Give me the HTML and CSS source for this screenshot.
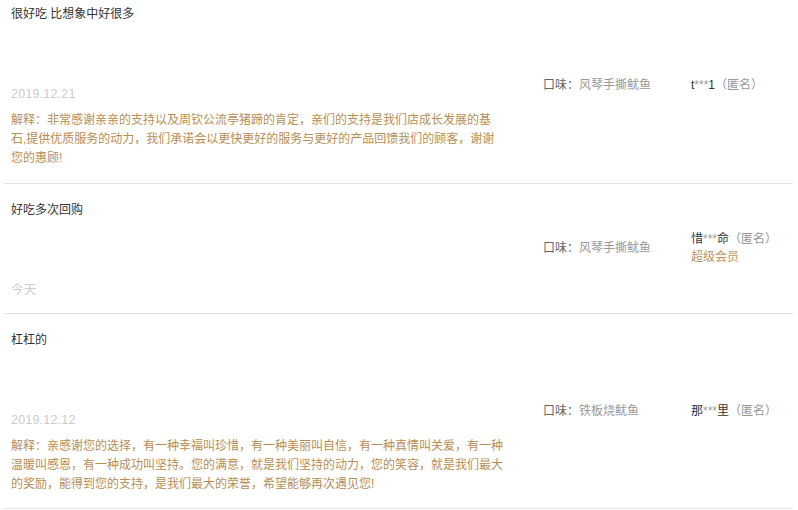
FILE: index.html
```html
<!DOCTYPE html>
<html>
<head>
    <meta charset="utf-8">
    <title>累计评价</title>
    <link rel="stylesheet" href="styles.css">
</head>
<body>
    <div class="rate-grid">
        <table>
            <tr>
                <td class="col-content">
                    <div class="rate-text">很好吃 比想象中好很多</div>
                    <div class="rate-date">2019.12.21</div>
                    <div class="rate-reply">解释：非常感谢亲亲的支持以及周钦公流亭猪蹄的肯定，亲们的支持是我们店成长发展的基石,提供优质服务的动力，我们承诺会以更快更好的服务与更好的产品回馈我们的顾客，谢谢您的惠顾!</div>
                </td>
                <td class="col-meta">
                    <span class="sku-label">口味：</span><span class="sku-value">风琴手撕鱿鱼</span>
                </td>
                <td class="col-author">
                    <div class="author">t<span class="mask">***</span>1<span class="anon">（匿名）</span></div>
                </td>
            </tr>
            <tr>
                <td class="col-content">
                    <div class="rate-text">好吃多次回购</div>
                    <div class="rate-date">今天</div>
                </td>
                <td class="col-meta">
                    <span class="sku-label">口味：</span><span class="sku-value">风琴手撕鱿鱼</span>
                </td>
                <td class="col-author">
                    <div class="author">惜<span class="mask">***</span>命<span class="anon">（匿名）</span></div>
                    <div class="vip">超级会员</div>
                </td>
            </tr>
            <tr>
                <td class="col-content">
                    <div class="rate-text">杠杠的</div>
                    <div class="rate-date">2019.12.12</div>
                    <div class="rate-reply">解释：亲感谢您的选择，有一种幸福叫珍惜，有一种美丽叫自信，有一种真情叫关爱，有一种温暖叫感恩，有一种成功叫坚持。您的满意，就是我们坚持的动力，您的笑容，就是我们最大的奖励，能得到您的支持，是我们最大的荣誉，希望能够再次遇见您!</div>
                </td>
                <td class="col-meta">
                    <span class="sku-label">口味：</span><span class="sku-value">铁板烧鱿鱼</span>
                </td>
                <td class="col-author">
                    <div class="author">那<span class="mask">***</span>里<span class="anon">（匿名）</span></div>
                </td>
            </tr>
        </table>
    </div>
</body>
</html>
```

FILE: styles.css
```css
body {
    margin: 0;
    background: #fff;
    font-family: "Liberation Sans", "Noto Sans CJK SC", sans-serif;
    font-size: 12px;
    color: #333;
}

.rate-grid {
    margin: -12px 0 0 4px;
    width: 789px;
}

table {
    border-collapse: collapse;
    width: 100%;
    table-layout: fixed;
}

tr {
    border-bottom: 1px solid #e3e3e3;
}

td {
    vertical-align: middle;
    padding: 0 0 0 7px;
}

.col-content {
    width: 518px;
    padding: 17px 7px 14px 7px;
}

.col-meta {
    width: 141px;
    line-height: 18px;
}

.col-author {
    line-height: 18px;
}

.rate-text {
    width: 494px;
    line-height: 18px;
    min-height: 74px;
    color: #333;
}

.rate-date {
    margin-top: 6px;
    line-height: 18px;
    font-size: 12.5px;
    letter-spacing: 0.2px;
    color: #ccc;
}

.rate-reply {
    width: 494px;
    margin-top: 8px;
    line-height: 19.2px;
    color: #b98d52;
}

.sku-label {
    color: #666;
}

.sku-value {
    color: #999;
}

.author {
    color: #333;
}

.mask {
    color: #999;
}

.anon {
    color: #999;
}

.vip {
    color: #c0945a;
}
```
